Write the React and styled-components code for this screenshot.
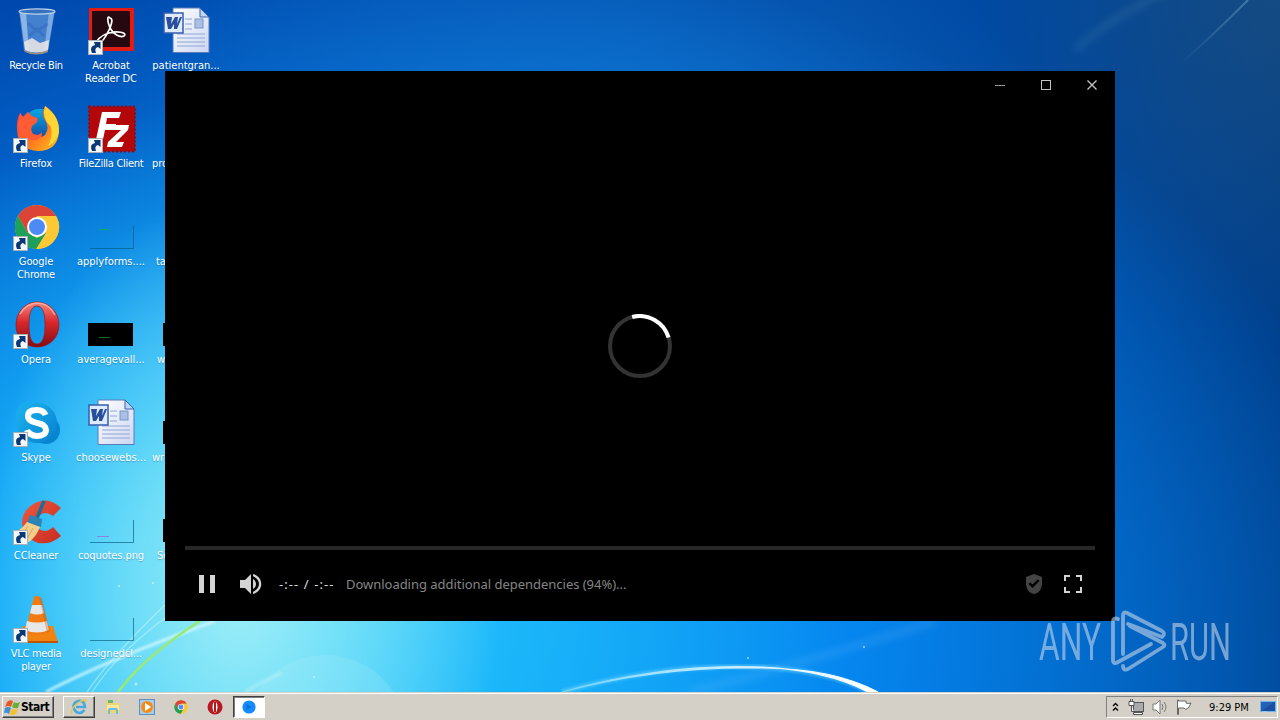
import React from 'react'
import styled, { createGlobalStyle } from "styled-components"

const desktopIcons = [
  { name: "Recycle Bin", art: "bin", tracking: -0.3 },
  { name: "Firefox", art: "firefox", link: true },
  { name: "Google Chrome", art: "chrome", link: true },
  { name: "Opera", art: "opera", link: true },
  { name: "Skype", art: "skype", link: true },
  { name: "CCleaner", art: "ccleaner", link: true },
  { name: "VLC media player", art: "vlc", link: true, tracking: -0.3 },
  { name: "Acrobat Reader DC", art: "acrobat", link: true },
  { name: "FileZilla Client", art: "filezilla", link: true, tracking: -0.3 },
  { name: "applyforms....", art: "thumb", mark: "#0fa860", tracking: 0 },
  { name: "averagevall...", art: "thumbDark", tracking: 0 },
  { name: "choosewebs...", art: "word", tracking: 0 },
  { name: "coquotes.png", art: "thumb", mark: "#8b7fe0", low: true },
  { name: "designedcl...", art: "thumb" },
  { name: "patientgran...", art: "word", tracking: 0 },
  { name: "pro", art: "none", left: 4 },
  { name: "tak", art: "none", left: 8 },
  { name: "wi", art: "thumbDark", left: 9 },
  { name: "wri", art: "thumbDark", left: 4 },
  { name: "Se", art: "thumbDark", left: 9 },
]

function ChromeShapes() {
  return (
    <>
      <circle cx="24" cy="24" r="22" fill="#fcc934" />
      <path d="M24 13 H43.1 A22 22 0 0 0 4.9 13 L14.5 29.5 Z" fill="#db4437" />
      <path d="M4.9 13 A22 22 0 0 0 23 46 L33.5 29.5 L24 35 L14.5 29.5 Z" fill="#1da05a" />
      <path d="M33.5 29.5 L24 46 A22 22 0 0 0 43.1 13 H24 Z" fill="#fcc934" />
      <circle cx="24" cy="24" r="10" fill="#fff" />
      <circle cx="24" cy="24" r="8" fill="#4c8bf5" />
    </>
  )
}

function Art({ kind, mark, low }) {
  switch (kind) {
    case "bin":
      return (
        <>
          <path d="M6 4 L11 44 Q23 49 35 44 L42 4 Z" fill="#5f97dc" fillOpacity=".7" />
          <path d="M7 6 L12 43 L16 45 L13 5 Z" fill="#d5e7fa" opacity=".5" />
          <path d="M41 6 L35 43 L31 45 L36 5 Z" fill="#d5e7fa" opacity=".4" />
          <path d="M15 16 L24 24 L35 17 M16 29 L24 22 L31 29" fill="none" stroke="#245cab" strokeWidth="3" opacity=".35" />
          <path d="M11 35 L19 31 L27 36 L36 33 L35 43 Q23 48 12 43 Z" fill="#eee9e5" opacity=".85" />
          <path d="M11 43 Q23 49 35 43 L35 45 Q23 50 12 45 Z" fill="#a48f82" />
          <ellipse cx="24" cy="4.5" rx="18" ry="2.6" fill="#3571bd" stroke="#bad0e8" strokeWidth="1.2" />
        </>
      )
    case "firefox":
      return (
        <>
          <circle cx="27" cy="22" r="18" fill="url(#ffGlobe)" />
          <path d="M32 1 Q46 10 46 26 Q45 46 25 46 Q5 45 4 25 Q3 15 7 8 L10 12 L15 7 Q18 12 24 13 Q26 17 20 20 Q16 25 21 30 Q27 34 32 30 Q37 23 32 15 Q28 8 32 1 Z" fill="url(#ffFlame)" />
          <path d="M32 1 Q47 12 46 27 Q44 37 35 41 Q40 32 38 22 Q28 13 32 1 Z" fill="#ffdf35" opacity=".9" />
          <path d="M7 8 L10 12 L15 7 Q18 12 24 13 Q25 18 19 20 Q14 23 17 27 Q25 33 29 27 Q30 36 19 35 Q5 31 5 19 Z" fill="#ff5b35" />
        </>
      )
    case "chrome":
      return <ChromeShapes />
    case "opera":
      return (
        <>
          <path fillRule="evenodd" d="M24 1 C36 1 46 11 46 24 C46 37 36 46 24 46 C12 46 3 37 3 24 C3 11 12 1 24 1 Z M24 5 C18 5 16 13 16 24 C16 35 18 43 24 43 C30 43 32 35 32 24 C32 13 30 5 24 5 Z" fill="url(#operaRed)" stroke="#9e1419" strokeWidth=".7" />
          <path d="M7 13 Q14 2 24 2 Q36 2 42 14" stroke="#ffb8ad" strokeWidth="1.5" fill="none" opacity=".75" />
        </>
      )
    case "skype":
      return (
        <>
          <circle cx="17" cy="16" r="14" fill="#18acec" />
          <circle cx="33" cy="31" r="14" fill="#0786d0" />
          <circle cx="24" cy="24" r="20" fill="url(#skypeBlue)" />
          <path d="M32.5 16 C31 12 28 11 24 11 C18 11 15 13 15 17 C15 21 18 22 24 24 C30 25 33 27 33 31 C33 35 29 37 24 37 C19 37 15 34 14 31" fill="none" stroke="#fff" strokeWidth="6" />
        </>
      )
    case "ccleaner":
      return (
        <>
          <path d="M48 11 Q36 -1 22 6 Q9 13 9 26 Q11 41 25 46 Q38 48 48 39 L40 30 Q33 37 26 32 Q19 26 26 19 Q32 13 40 19 Z" fill="url(#ccRed)" />
          <path d="M31 4 L22 26" stroke="#196e9e" strokeWidth="3.5" />
          <path d="M17 18 L29 22 L28 30 L14 26 Z" fill="#2d83b3" />
          <path d="M14 25 L27 30 Q23 40 16 45 L4 43 L2 35 Q8 33 14 25 Z" fill="#f4cf8b" />
          <path d="M15 29 L8 39 M20 31 L14 42" stroke="#d9a762" fill="none" />
        </>
      )
    case "vlc":
      return (
        <>
          <path d="M10 31 H40 L45 47 H4 Z" fill="#f18411" />
          <path d="M4 46 H45 V48 H4 Z" fill="#be5300" />
          <path d="M21 2 Q24 0 27 2 L37 37 Q24 44 12 37 Z" fill="#f47b12" />
          <path d="M19 10 H29 L31 18 Q24 21 17 18 Z M14 26 Q24 29 34 26 L36 35 Q24 40 12 35 Z" fill="#e7e7e7" />
          <path d="M26 2 L34 38 L37 36 L29 3 Z" fill="#b84e00" opacity=".3" />
        </>
      )
    case "acrobat":
      return (
        <>
          <path d="M1 1 H46 V44 H1 Z" fill="#e31b12" />
          <path d="M4 4 H42 V40 H4 Z" fill="#260910" />
          <path d="M22 11 C19 8 19 14 22 21 C25 27 32 31 36 29 C40 25 28 24 21 26 C13 28 6 35 11 36 C15 36 19 27 22 21 C24 15 25 12 22 11 Z" fill="none" stroke="#fff" strokeWidth="1.7" />
        </>
      )
    case "filezilla":
      return (
        <>
          <rect x="1" y="1.5" width="46" height="45" fill="#b30709" stroke="#880d1d" strokeWidth="2" strokeDasharray="2 2" />
          <path d="M14 7 H33 L31 13 H19 L18 19 H28 L26 25 H17 L14 39 H7 Z" fill="#fff" />
          <path d="M24 20 H41 L40 25 L28 37 H36 L34 42 H19 L20 37 L33 25 H23 Z" fill="#fff" />
        </>
      )
    case "word":
      return (
        <>
          <path d="M10 1 H37 L46 10 V45.5 H10 Z" fill="url(#paper)" stroke="#5b7bb7" />
          <path d="M37 1 V10 H46 Z" fill="#bed4f3" stroke="#3b65a7" />
          <path d="M22 12 H29 M22 17 H29 M22 22 H29 M14 27 H42 M14 31 H42 M14 35 H42 M14 39 H42" stroke="#91a6d0" />
          <rect x="32" y="12" width="8" height="9" fill="#a9bfe3" stroke="#7896c4" />
          <rect x="1" y="6" width="19" height="20" fill="#dfebfd" stroke="#345faf" strokeWidth="1.5" />
          <path d="M3 10 H9 L8 17 L12 10 H15 L14 17 L17 10 H19 L14 22 H11 L11 17 L8 22 H5 Z" fill="#294e9b" />
        </>
      )
    case "thumbDark":
      return (
        <>
          <rect x="0" y="22" width="45" height="23" fill="#000" />
          <path d="M11 36.5 H22" stroke="#067018" />
        </>
      )
    case "thumb":
      return (
        <>
          <path d="M45.5 23 V45.5 H2" stroke="#055a80" strokeOpacity=".65" fill="none" />
          {mark && <path d={low ? "M9 39.5 H21" : "M11 26.5 H22"} stroke={mark} />}
        </>
      )
    default:
      return null
  }
}

function ShortcutArrow() {
  return (
    <Shortcut viewBox="0 0 15 15">
      <rect x=".5" y=".5" width="14" height="14" fill="#f4f8fb" stroke="#a9afb5" />
      <path d="M4 13 Q1 6 7 5 L6 2 H12.5 V9 L10 7 Q6 8 8 13 Z" fill="#0a3776" />
    </Shortcut>
  )
}

function Wallpaper() {
  return (
    <Backdrop viewBox="0 0 1280 692" preserveAspectRatio="none">
      <defs>
        <linearGradient id="ffFlame" x1="0" y1="0" x2="1" y2="1">
          <stop offset="0" stopColor="#ef284e" /><stop offset=".5" stopColor="#ff6c20" /><stop offset="1" stopColor="#ffc41c" />
        </linearGradient>
        <linearGradient id="ffGlobe" x1="0" y1="0" x2="0" y2="1">
          <stop offset="0" stopColor="#08a8e5" /><stop offset="1" stopColor="#173a96" />
        </linearGradient>
        <linearGradient id="operaRed" x1="0" y1="0" x2="0" y2="1">
          <stop offset="0" stopColor="#f5897e" /><stop offset=".45" stopColor="#d8272b" /><stop offset="1" stopColor="#840c10" />
        </linearGradient>
        <linearGradient id="skypeBlue" x1="0" y1="0" x2="1" y2="1">
          <stop offset="0" stopColor="#1bb5ef" /><stop offset="1" stopColor="#087fce" />
        </linearGradient>
        <linearGradient id="ccRed" x1="0" y1="0" x2="1" y2="1">
          <stop offset="0" stopColor="#ee5940" /><stop offset="1" stopColor="#c82b20" />
        </linearGradient>
        <linearGradient id="paper" x1="0" y1="0" x2="1" y2="1">
          <stop offset="0" stopColor="#fff" /><stop offset="1" stopColor="#ccd7f4" />
        </linearGradient>
        <linearGradient id="arc" x1="0" y1="0" x2="1" y2="0">
          <stop offset="0" stopColor="#73d5ff" /><stop offset=".65" stopColor="#dff3ff" /><stop offset="1" stopColor="#fff" />
        </linearGradient>
        <linearGradient id="streak" x1="0" y1="1" x2="1" y2="0">
          <stop offset="0" stopColor="#8fb9da" stopOpacity="0" /><stop offset="1" stopColor="#8fb9da" stopOpacity=".4" />
        </linearGradient>
        <filter id="soft"><feGaussianBlur stdDeviation="1.2" /></filter>
        <filter id="haze"><feGaussianBlur stdDeviation="3.5" /></filter>
      </defs>
      <path d="M1075 50 Q1110 18 1165 -8" stroke="#729fb9" strokeOpacity=".15" strokeWidth="7" fill="none" filter="url(#haze)" />
      <path d="M1180 64 Q1210 38 1248 0" stroke="url(#streak)" strokeWidth="2" fill="none" />
      <circle cx="325" cy="737" r="82" fill="#b4f0fb" fillOpacity=".2" />
      <path d="M690 692 Q800 665 935 621" stroke="#83c9ff" strokeOpacity=".16" strokeWidth="8" fill="none" filter="url(#haze)" />
      <path d="M562 692 C640 670 710 665 760 667 C805 669 840 677 870 692" stroke="#6bd1ff" strokeOpacity=".5" strokeWidth="5" fill="none" filter="url(#soft)" />
      <path d="M562 692 C640 670 710 665 760 667 C805 669 840 677 868 692 L878 692 C846 675 805 668 760 668 C710 667 640 671 562 692 Z" fill="url(#arc)" stroke="url(#arc)" strokeWidth="1.2" />
      <path d="M46 692 Q105 661 215 621" stroke="#d9faff" strokeOpacity=".75" strokeWidth="3" fill="none" filter="url(#soft)" />
      <path d="M87 692 Q110 658 165 605 M92 692 Q120 650 168 616" stroke="#c3f7ff" strokeOpacity=".55" strokeWidth="1.2" fill="none" />
      <path d="M118 692 Q146 655 200 621" stroke="#9bea70" strokeWidth="2.5" fill="none" />
      <path d="M245 692 Q265 680 282 673" stroke="#d5faff" strokeOpacity=".3" strokeWidth="4" fill="none" filter="url(#soft)" />
      <g fill="#d7faff" opacity=".7"><circle cx="119" cy="586" r="1" /><circle cx="153" cy="583" r="1" /><circle cx="136" cy="684" r="1.5" /><circle cx="314" cy="677" r="1" /><circle cx="748" cy="658" r="1" /><circle cx="864" cy="647" r="1" /></g>
    </Backdrop>
  )
}

function Player() {
  return (
    <PlayerWindow>
      <TitleBar>
        <WindowButton viewBox="0 0 46 28"><path d="M18 14.5H28" stroke="#999" /></WindowButton>
        <WindowButton viewBox="0 0 46 28"><rect x="18.5" y="9.5" width="9" height="9" /></WindowButton>
        <WindowButton viewBox="0 0 46 28"><path d="M18.5 9.5L27.5 18.5M27.5 9.5L18.5 18.5" strokeWidth="1.4" /></WindowButton>
      </TitleBar>
      <Stage>
        <Spinner viewBox="0 0 64 64">
          <circle cx="32" cy="32" r="30" stroke="#333" />
          <path d="M24.2 3A30 30 0 0 1 60.5 23.5" stroke="#fff" />
        </Spinner>
      </Stage>
      <Progress />
      <Controls>
        <ControlIcon viewBox="0 0 24 24"><path d="M4 3h5v18H4zM15 3h5v18h-5z" /></ControlIcon>
        <ControlIcon $left={20} viewBox="0 0 24 24">
          <path d="M1 8v8h5l6 6V2L6 8zM14 7v10c4-2 4-8 0-10zM14 2v2.3c8 3 8 12.4 0 15.4V22c11-3 11-17 0-20z" />
        </ControlIcon>
        <Time>-:-- / -:--</Time>
        <Status>Downloading additional dependencies (94%)...</Status>
        <ControlIcon viewBox="0 0 24 24" $dim>
          <path fillRule="evenodd" d="M12 2l8 3v6c0 6-3 10-8 11-5-1-8-5-8-11V5zM6.5 12l4 4 7-7-1.7-1.7-5.3 5.3-2.3-2.3z" />
        </ControlIcon>
        <ControlIcon $left={15} viewBox="0 0 24 24">
          <path d="M3 3h6v2H5v4H3zM15 3h6v6h-2V5h-4zM3 15h2v4h4v2H3zM19 15h2v6h-6v-2h4z" />
        </ControlIcon>
      </Controls>
    </PlayerWindow>
  )
}

function Watermark() {
  return (
    <Brand viewBox="0 0 200 64">
      <text x="1" y="51" textLength="62" lengthAdjust="spacingAndGlyphs">ANY</text>
      <g fill="none" stroke="#c5d5ea" strokeWidth="3.8" strokeLinejoin="round" strokeLinecap="round">
        <path d="M85 45V7Q85 2 89 4L124 22Q128 25 124 28L90 15" />
        <path d="M80 10Q75 8 75 13V51Q75 56 80 53L113 35" />
        <path d="M92 17L125 34Q128 36 125 38L90 60Q85 62 85 57" />
      </g>
      <text x="132" y="51" textLength="61" lengthAdjust="spacingAndGlyphs">RUN</text>
    </Brand>
  )
}

function Taskbar() {
  return (
    <Bar>
      <StartButton>
        <svg width="17" height="16" viewBox="0 0 17 16">
          <path d="M3 3Q6 0 9 2L7 8Q4 6 1 8Z" fill="#e95824" />
          <path d="M10 3Q13 5 16 3L14 9Q11 10 8 8Z" fill="#69ae38" />
          <path d="M1 9Q4 7 7 9L5 15Q3 13 0 14Z" fill="#458ed2" />
          <path d="M8 9Q11 12 14 10L12 15Q9 17 6 15Z" fill="#f7c12c" />
        </svg>
        Start
      </StartButton>
      <TaskButton $raised>
        <svg width="18" height="18" viewBox="0 0 18 18">
          <path d="M14.5 12Q9 18 4.5 12Q1.5 6 7 3.5Q14 1 15 9H6" fill="none" stroke="#48a9df" strokeWidth="2.6" />
          <path d="M2 16Q-1 12 8 5Q17-1 16 5" fill="none" stroke="#e9c74d" strokeWidth="1.5" />
        </svg>
      </TaskButton>
      <TaskButton>
        <svg width="16" height="16" viewBox="0 0 16 16">
          <path d="M1 2h6l1 2h7v10H1z" fill="#ecd478" /><path d="M3 1h5v3H3z" fill="#6eb66a" />
          <path d="M2 6h12v5H2z" fill="#f7e9a4" /><path d="M3 15v-4q0-2 2-2h6q2 0 2 2v4h-2v-4H5v4z" fill="#6cbbe0" />
        </svg>
      </TaskButton>
      <TaskButton>
        <svg width="16" height="16" viewBox="0 0 16 16">
          <rect x=".5" y=".5" width="15" height="15" fill="#a8cde9" stroke="#5a91c3" />
          <circle cx="8" cy="8" r="6" fill="#f48b18" /><path d="M6 4l6 4-6 4z" fill="#fff" />
        </svg>
      </TaskButton>
      <TaskButton><svg width="14" height="14" viewBox="1 1 46 46"><ChromeShapes /></svg></TaskButton>
      <TaskButton>
        <svg width="16" height="16" viewBox="0 0 16 16">
          <circle cx="8" cy="8" r="7.5" fill="#ba1820" /><ellipse cx="8" cy="8" rx="2.5" ry="5.5" fill="#fff" /><path d="M8 3v10" stroke="#b51a20" strokeWidth="2" />
        </svg>
      </TaskButton>
      <TaskButton $active>
        <svg width="14" height="14" viewBox="0 0 14 14">
          <circle cx="7" cy="7" r="6.6" fill="#168bff" /><path d="M4.5 4l5 3-5 3z" fill="#0a6fdc" />
        </svg>
      </TaskButton>
      <Tray>
        <svg width="7" height="10" viewBox="0 0 7 10" fill="none" stroke="#000" strokeWidth="1.4"><path d="M1 4l2.5-2.5L6 4M1 8.5L3.5 6 6 8.5" /></svg>
        <TrayIcon $left={9} viewBox="0 0 16 16">
          <rect x="5.5" y="3.5" width="10" height="9" fill="#aaa" stroke="#555" />
          <path d="M5.5 15.5v-2h9v2z" fill="#fff" stroke="#555" />
          <path d="M1 2.5h5v4H1zM3.5 6.5v6H6M2.5 2V0M4.5 2V0" stroke="#555" fill="#fff" />
        </TrayIcon>
        <TrayIcon $left={8} viewBox="0 0 16 16">
          <path d="M1 5h3l4-4v14l-4-4H1z" fill="#fff" stroke="#777" /><path d="M10 5q2 3 0 6M12 3q4 5 0 10" fill="none" stroke="#777" />
        </TrayIcon>
        <TrayIcon $left={8} viewBox="0 0 16 16">
          <path d="M1.5 1v14.5h1V9H8q1 2 3 1 2-1 4-6-3 1-5 0V2H2.5V1z" fill="#fff" stroke="#666" />
        </TrayIcon>
        <Clock>9:29 PM</Clock>
        <svg width="16" height="14" viewBox="0 0 16 14">
          <rect x=".5" y="1.5" width="15" height="10" fill="#2562b5" stroke="#6eb8e9" /><path d="M1 11L14 2h1v9z" fill="#1c4ea4" /><path d="M2 12h5" stroke="#b8d6e9" />
        </svg>
      </Tray>
    </Bar>
  )
}

function App() {
  return (
    <Screen>
      <GlobalStyle />
      <Desktop>
        <Wallpaper />
        <IconGrid>
          {desktopIcons.map((item) => (
            <DesktopItem key={item.name}>
              <IconBox>
                <IconArt viewBox="0 0 48 48"><Art kind={item.art} mark={item.mark} low={item.low} /></IconArt>
                {item.link && <ShortcutArrow />}
              </IconBox>
              <Label $left={item.left} $tracking={item.tracking}>{item.name}</Label>
            </DesktopItem>
          ))}
        </IconGrid>
        <Player />
        <Watermark />
      </Desktop>
      <Taskbar />
    </Screen>
  )
}

export default App

const GlobalStyle = createGlobalStyle`
* { box-sizing: border-box; }
body {
  margin: 0;
  overflow: hidden;
}
svg {
  display: block;
  flex-shrink: 0;
}
`

const Screen = styled.div`
  width: 1280px;
  height: 720px;
  display: flex;
  flex-direction: column;
  font-family: "DejaVu Sans Condensed", "DejaVu Sans", sans-serif;
  font-size: 11px;
`

const Desktop = styled.main`
  position: relative;
  height: 692px;
  overflow: hidden;
  background:
    radial-gradient(ellipse 260px 400px at 240px 590px, rgba(164,240,247,.95), rgba(134,232,247,.75) 40%, rgba(60,200,245,0) 100%),
    radial-gradient(ellipse 560px 520px at 290px 610px, #3fcdfc 0%, rgba(30,188,250,.85) 40%, rgba(0,130,240,0) 100%),
    radial-gradient(ellipse 1000px 690px at 400px 640px, #0a9bfa 0%, #0586ef 45%, rgba(0,74,170,0) 100%),
    radial-gradient(ellipse 480px 260px at 580px 150px, rgba(30,125,205,.6), rgba(30,125,205,0)),
    radial-gradient(ellipse 300px 340px at 1280px 0, rgba(26,78,128,.8), rgba(26,78,128,0)),
    linear-gradient(90deg, #0048ad 0%, #0050b0 50%, #00489f 85%, #003f8c 100%);
`

const Backdrop = styled.svg`
  position: absolute;
  inset: 0;
  width: 100%;
  height: 100%;
`

const IconGrid = styled.div`
  position: relative;
  display: grid;
  grid-auto-flow: column;
  grid-template-rows: repeat(7, 98px);
  grid-auto-columns: 75px;
  width: 225px;
  margin-left: -2px;
`

const DesktopItem = styled.div`
  display: flex;
  flex-direction: column;
  align-items: center;
  padding-top: 7px;
`

const IconBox = styled.div`
  position: relative;
  width: 48px;
  height: 48px;
  margin-left: 2px;
`

const IconArt = styled.svg`
  width: 48px;
  height: 48px;
`

const Shortcut = styled.svg`
  position: absolute;
  left: 0;
  bottom: 0;
  width: 15px;
  height: 15px;
`

const Label = styled.div`
  width: 75px;
  margin-top: 4px;
  padding: 0 ${(p) => (p.$left ? 0 : 1)}px 0 ${(p) => p.$left || 2}px;
  color: #fff;
  line-height: 13px;
  text-align: ${(p) => (p.$left ? "left" : "center")};
  text-shadow: 0 1px 1px rgba(0, 40, 90, .3);
  letter-spacing: ${(p) => p.$tracking ?? -0.1}px;
`

const PlayerWindow = styled.section`
  position: absolute;
  left: 165px;
  top: 71px;
  width: 950px;
  height: 550px;
  display: flex;
  flex-direction: column;
  background: #000;
`

const TitleBar = styled.div`
  display: flex;
  justify-content: flex-end;
  height: 28px;
`

const WindowButton = styled.svg`
  width: 46px;
  height: 28px;
  fill: none;
  stroke: #c4c4c4;
`

const Stage = styled.div`
  display: flex;
  justify-content: center;
  padding-top: 215px;
  height: 447px;
`

const Spinner = styled.svg`
  width: 64px;
  height: 64px;
  fill: none;
  stroke-width: 4;
`

const Progress = styled.div`
  height: 4px;
  margin: 0 20px;
  background: #272727;
`

const Controls = styled.div`
  display: flex;
  align-items: center;
  height: 68px;
  padding: 0 30px;
  font-family: "Noto Sans", sans-serif;
  font-size: 13px;
`

const ControlIcon = styled.svg`
  width: 24px;
  height: 24px;
  margin-left: ${(p) => p.$left || 0}px;
  fill: ${(p) => (p.$dim ? "#444" : "#d4d4d4")};
`

const Time = styled.span`
  width: 67px;
  margin-left: 16px;
  color: #ddd;
  letter-spacing: 1.08px;
  white-space: nowrap;
`

const Status = styled.span`
  flex: 1;
  color: #858585;
  letter-spacing: -0.03px;
  white-space: nowrap;
`

const Brand = styled.svg`
  position: absolute;
  left: 1038px;
  top: 609px;
  width: 200px;
  height: 64px;
  overflow: visible;
  opacity: .6;
  fill: #c5d5ea;
  font-family: Roboto, sans-serif;
  font-size: 51px;
`

const Bar = styled.footer`
  display: flex;
  align-items: center;
  height: 28px;
  padding: 2px 2px 1px;
  border-top: 1px solid #d4d0c8;
  box-shadow: inset 0 1px #fff;
  background: #d4d0c8;
`

const StartButton = styled.div`
  display: flex;
  align-items: center;
  width: 52px;
  height: 22px;
  padding-left: 1px;
  margin-right: 9px;
  border: 1px solid;
  border-color: #fff #404040 #404040 #fff;
  box-shadow: inset -1px -1px #808080;
  font-weight: bold;
  font-size: 12px;
  letter-spacing: -0.5px;
`

const TaskButton = styled.div`
  display: flex;
  align-items: center;
  justify-content: center;
  width: 32px;
  height: 22px;
  margin-right: 2px;
  border: ${(p) => (p.$raised || p.$active ? "1px solid" : "0")};
  border-color: ${(p) => (p.$active ? "#404040 #fff #fff #404040" : "#fff #404040 #404040 #fff")};
  box-shadow: ${(p) => (p.$raised ? "inset -1px -1px #808080" : p.$active ? "inset 1px 1px #808080" : "none")};
  background: ${(p) => (p.$active ? "#fff" : "transparent")};
`

const Tray = styled.div`
  display: flex;
  align-items: center;
  width: 172px;
  height: 22px;
  margin-left: auto;
  padding-left: 5px;
  border: 1px solid;
  border-color: #808080 #fff #fff #808080;
`

const TrayIcon = styled.svg`
  width: 16px;
  height: 16px;
  margin-left: ${(p) => p.$left}px;
`

const Clock = styled.span`
  width: 51px;
  margin-left: 17px;
  white-space: nowrap;
`
